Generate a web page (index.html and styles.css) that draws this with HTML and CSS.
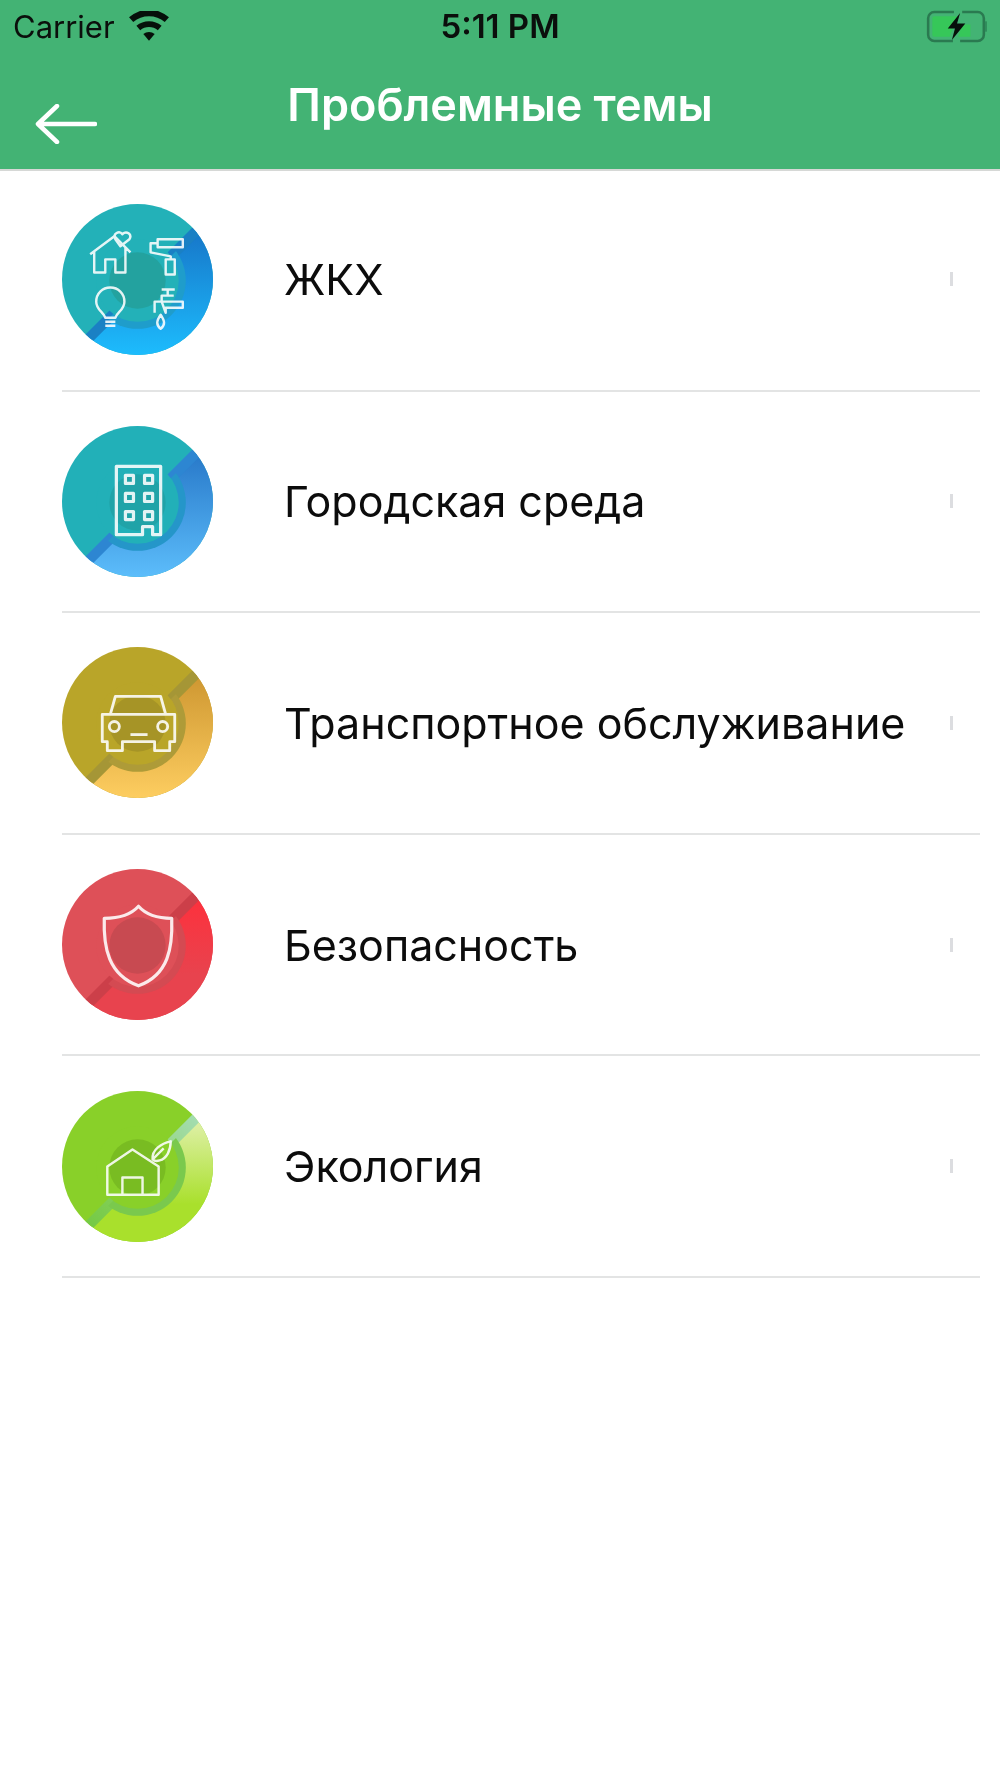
FILE: index.html
```html
<!DOCTYPE html>
<html lang="ru">
<head>
<meta charset="utf-8">
<title>Проблемные темы</title>
<link rel="stylesheet" href="styles.css">
</head>
<body>
<svg class="shared-defs" width="0" height="0" aria-hidden="true">
  <defs>
    <clipPath id="disc"><circle cx="75" cy="75" r="75"/></clipPath>
    <clipPath id="lower-right"><path d="M160 0H200V200H0V160Z"/></clipPath>
    <linearGradient id="g1" x1="0" y1="0" x2="0" y2="1"><stop offset="0.1" stop-color="#1670c4"/><stop offset="1" stop-color="#1dbcfd"/></linearGradient>
    <linearGradient id="g2" x1="0" y1="0" x2="0" y2="1"><stop offset="0.1" stop-color="#2372c4"/><stop offset="1" stop-color="#5cbdfb"/></linearGradient>
    <linearGradient id="g3" x1="0" y1="0" x2="0" y2="1"><stop offset="0.1" stop-color="#c9912c"/><stop offset="1" stop-color="#fdcd60"/></linearGradient>
    <linearGradient id="g4" x1="0" y1="0" x2="0" y2="1"><stop offset="0.15" stop-color="#ff2f3b"/><stop offset="0.7" stop-color="#e8434e"/></linearGradient>
    <linearGradient id="g5" x1="0" y1="0" x2="0" y2="1"><stop offset="0.2" stop-color="#dff0a8"/><stop offset="0.75" stop-color="#a9e02c"/></linearGradient>
    <linearGradient id="band5" gradientUnits="userSpaceOnUse" x1="145" y1="15" x2="15" y2="145"><stop offset="0" stop-color="#a8dfc0"/><stop offset="0.5" stop-color="#8fd26a"/><stop offset="1" stop-color="#6fc83c"/></linearGradient>
  </defs>
</svg>
<header class="top">
  <div class="status">
    <div class="status-left">
      <span class="carrier">Carrier</span>
      <svg class="wifi" viewBox="0 0 40 28"><path d="M20 28 14.600 21.600a8.400 8.400 0 0 1 10.800 0Z"/><path d="M11.600 18 8 13.800a18.600 18.600 0 0 1 24 0L28.400 18a13 13 0 0 0-16.800 0Z"/><path d="M5 10.200 1 5.600a29 29 0 0 1 38 0l-4 4.600a23 23 0 0 0-30 0Z"/></svg>
    </div>
    <span class="time">5:11 PM</span>
    <svg class="battery" viewBox="0 0 60 32">
      <path class="batt-shell" d="M27 30H9a6 6 0 0 1-6-6V8a6 6 0 0 1 6-6h19M36 2h15a6 6 0 0 1 6 6v16a6 6 0 0 1-6 6H34"/>
      <path class="batt-tip" d="M59 11v10"/>
      <path class="batt-fill" d="M9 6h22l-7 20H9a2 2 0 0 1-2-2V8a2 2 0 0 1 2-2Z"/>
      <path class="batt-fill" d="M36 14h8v12H32Z"/>
      <path class="batt-bolt" d="M34 3 22 18h7l-3 11 13-16h-8Z"/>
    </svg>
  </div>
  <div class="nav">
    <svg class="back" viewBox="0 0 62 40"><path d="M60 20H3M22 2 3 20l19 18"/></svg>
    <h1 class="title">Проблемные темы</h1>
  </div>
</header>
<main class="list">
  <div class="row">
    <svg class="icon" viewBox="0 0 150 150">
      <g clip-path="url(#disc)">
        <rect width="150" height="150" class="b1"/>
        <rect width="150" height="150" fill="url(#g1)" clip-path="url(#lower-right)"/>
        <path d="M145 15 15 145" class="band d1"/>
        <circle cx="75" cy="76" r="48" class="r1" clip-path="url(#lower-right)"/>
        <circle cx="75" cy="76" r="41" class="b1"/>
        <circle cx="75" cy="76" r="28" class="i1"/>
      </g>
      <g class="glyph thin">
        <path d="M28 50 52 32 68 48M32 47V68H43V55H53V68H63V43"/>
        <path d="M58 42 53 35C50 29 57 26 60 30 64 26 70 30 67 35Z"/>
        <path d="M95 35H120V43H95ZM95 39H88V48L108 52V55M103 55H112V70H103Z"/>
        <path d="M43 113C41 107 34 105 34 97 34 89 40 83 48 83 56 83 62 89 62 97 62 105 55 107 53 113ZM43 113H53M43 117H53M43 121H53"/>
        <path d="M92 108V97H99V91H111M105 84V91M99 85H112M99 97H120V103H103V108ZM98 110C94 116 93 120 98 124 103 120 102 116 98 110Z"/>
      </g>
    </svg>
    <span class="label">ЖКХ</span>
    <span class="chevron"></span>
  </div>
  <div class="row">
    <svg class="icon" viewBox="0 0 150 150">
      <g clip-path="url(#disc)">
        <rect width="150" height="150" class="b2"/>
        <rect width="150" height="150" fill="url(#g2)" clip-path="url(#lower-right)"/>
        <path d="M145 15 15 145" class="band d2"/>
        <circle cx="75" cy="76" r="48" class="r2" clip-path="url(#lower-right)"/>
        <circle cx="75" cy="76" r="41" class="b2"/>
        <circle cx="75" cy="76" r="28" class="i2"/>
      </g>
      <g class="glyph thick">
        <path d="M54 40H98V108H90V100H80V108H54Z"/>
        <path d="M63 49H71V57H63ZM82 49H90V57H82ZM63 67H71V75H63ZM82 67H90V75H82ZM63 85H71V93H63ZM82 85H90V93H82Z"/>
      </g>
    </svg>
    <span class="label">Городская среда</span>
    <span class="chevron"></span>
  </div>
  <div class="row">
    <svg class="icon" viewBox="0 0 150 150">
      <g clip-path="url(#disc)">
        <rect width="150" height="150" class="b3"/>
        <rect width="150" height="150" fill="url(#g3)" clip-path="url(#lower-right)"/>
        <path d="M145 15 15 145" class="band d3"/>
        <circle cx="75" cy="76" r="48" class="r3" clip-path="url(#lower-right)"/>
        <circle cx="75" cy="76" r="41" class="b3"/>
        <circle cx="75" cy="76" r="28" class="i3"/>
      </g>
      <g class="glyph">
        <path d="M48 67 53 49H98L103 67"/>
        <path d="M40 67H112V94H107V103H92V94H60V103H45V94H40Z"/>
        <circle cx="52" cy="79" r="5"/>
        <circle cx="100" cy="79" r="5"/>
        <path d="M68 87H85"/>
      </g>
    </svg>
    <span class="label">Транспортное обслуживание</span>
    <span class="chevron"></span>
  </div>
  <div class="row">
    <svg class="icon" viewBox="0 0 150 150">
      <g clip-path="url(#disc)">
        <rect width="150" height="150" class="b4"/>
        <rect width="150" height="150" fill="url(#g4)" clip-path="url(#lower-right)"/>
        <path d="M145 15 15 145" class="band d4"/>
        <circle cx="75" cy="76" r="48" class="r4" clip-path="url(#lower-right)"/>
        <circle cx="75" cy="76" r="41" class="b4"/>
        <circle cx="75" cy="76" r="28" class="i4"/>
      </g>
      <g class="glyph thick">
        <path d="M76 37C68 46 54 49 42 49 41 78 46 105 76 116 106 105 110 78 109 49 97 49 84 46 76 37Z"/>
      </g>
    </svg>
    <span class="label">Безопасность</span>
    <span class="chevron"></span>
  </div>
  <div class="row">
    <svg class="icon" viewBox="0 0 150 150">
      <g clip-path="url(#disc)">
        <rect width="150" height="150" class="b5"/>
        <rect width="150" height="150" fill="url(#g5)" clip-path="url(#lower-right)"/>
        <path d="M145 15 15 145" class="band d5"/>
        <circle cx="75" cy="76" r="48" class="r5" clip-path="url(#lower-right)"/>
        <circle cx="75" cy="76" r="41" class="b5"/>
        <circle cx="75" cy="76" r="28" class="i5"/>
      </g>
      <g class="glyph thin">
        <path d="M45 75 70 58 96 75V103H45ZM60 103V86H80V103"/>
        <path d="M90 68C89 58 99 52 108 50 108 59 104 67 97 69 94 70 91 69 90 68ZM90 68 101 57"/>
      </g>
    </svg>
    <span class="label">Экология</span>
    <span class="chevron"></span>
  </div>
</main>
</body>
</html>
```

FILE: styles.css
```css
* { box-sizing: border-box; }
html, body { margin: 0; padding: 0; background: #fff; }
body { width: 1000px; height: 1778px; overflow: hidden; font-family: Inter, "Liberation Sans", sans-serif; }

.shared-defs { display: block; height: 0; }

.top { height: 171px; background: #43b374; border-bottom: 2px solid #d6d8d6; display: flex; flex-direction: column; }

.status { display: grid; grid-template-columns: 1fr auto 1fr; align-items: center; height: 52px; padding: 0 13px; color: #0b0f0c; filter: blur(.6px); }
.status-left { display: flex; align-items: center; gap: 13px; }
.carrier { font-size: 31px; }
.time { font-size: 33px; font-weight: 600; }
.wifi { width: 42px; height: 30px; fill: #06100a; }
.battery { width: 62px; height: 33px; justify-self: end; overflow: visible; }
.batt-shell { fill: none; stroke: #2a7a50; stroke-width: 2.500; }
.batt-tip { fill: none; stroke: #2f8c5b; stroke-width: 2; }
.batt-fill { fill: #36c759; }
.batt-bolt { fill: #06100a; }

.nav { display: grid; grid-template-columns: 1fr auto 1fr; }
.back { grid-column: 1; width: 62px; height: 40px; margin: 52px 0 0 35px; fill: none; stroke: #fff; stroke-width: 4.500; stroke-linecap: round; stroke-linejoin: round; filter: blur(.5px); }
.title { grid-column: 2; margin: 25px 0 0; font-size: 45px; line-height: 56px; font-weight: 600; color: #fff; filter: blur(.7px); white-space: nowrap; }

.list { display: flex; flex-direction: column; }
.row { display: flex; align-items: center; height: 221.6px; margin: 0 20px 0 62px; border-bottom: 2px solid #e3e4e4; }
.row:first-child { height: 220.6px; padding-bottom: 2px; }
.icon { width: 151px; height: 151px; flex: none; filter: blur(.6px); }
.label { margin-left: 71px; font-size: 43px; color: #0c0c0c; white-space: nowrap; filter: blur(.6px); }
.chevron { margin-left: auto; margin-right: 27px; width: 3px; height: 14px; background: #dcdde0; filter: blur(.5px); }

.band { fill: none; stroke-width: 10; }
.glyph { fill: none; stroke: #fff; stroke-width: 2.800; opacity: .88; stroke-linejoin: round; }
.glyph.thin { stroke-width: 2.400; }
.glyph.thick { stroke-width: 3.200; }

.b1 { fill: #23b1b8; } .d1 { stroke: #1a80c4; } .r1 { fill: #1f9dcb; } .i1 { fill: #23a29f; }
.b2 { fill: #22b0b8; } .d2 { stroke: #2d86d2; } .r2 { fill: #2596c9; } .i2 { fill: #20a3a8; }
.b3 { fill: #b9a529; } .d3 { stroke: #a59636; } .r3 { fill: #ae9b38; } .i3 { fill: #a69426; }
.b4 { fill: #de5058; } .d4 { stroke: #cc3f49; } .r4 { fill: #d44a52; } .i4 { fill: #c84a51; }
.b5 { fill: #89d029; } .d5 { stroke: url(#band5); } .r5 { fill: #7ac94d; } .i5 { fill: #79bc22; }
```
